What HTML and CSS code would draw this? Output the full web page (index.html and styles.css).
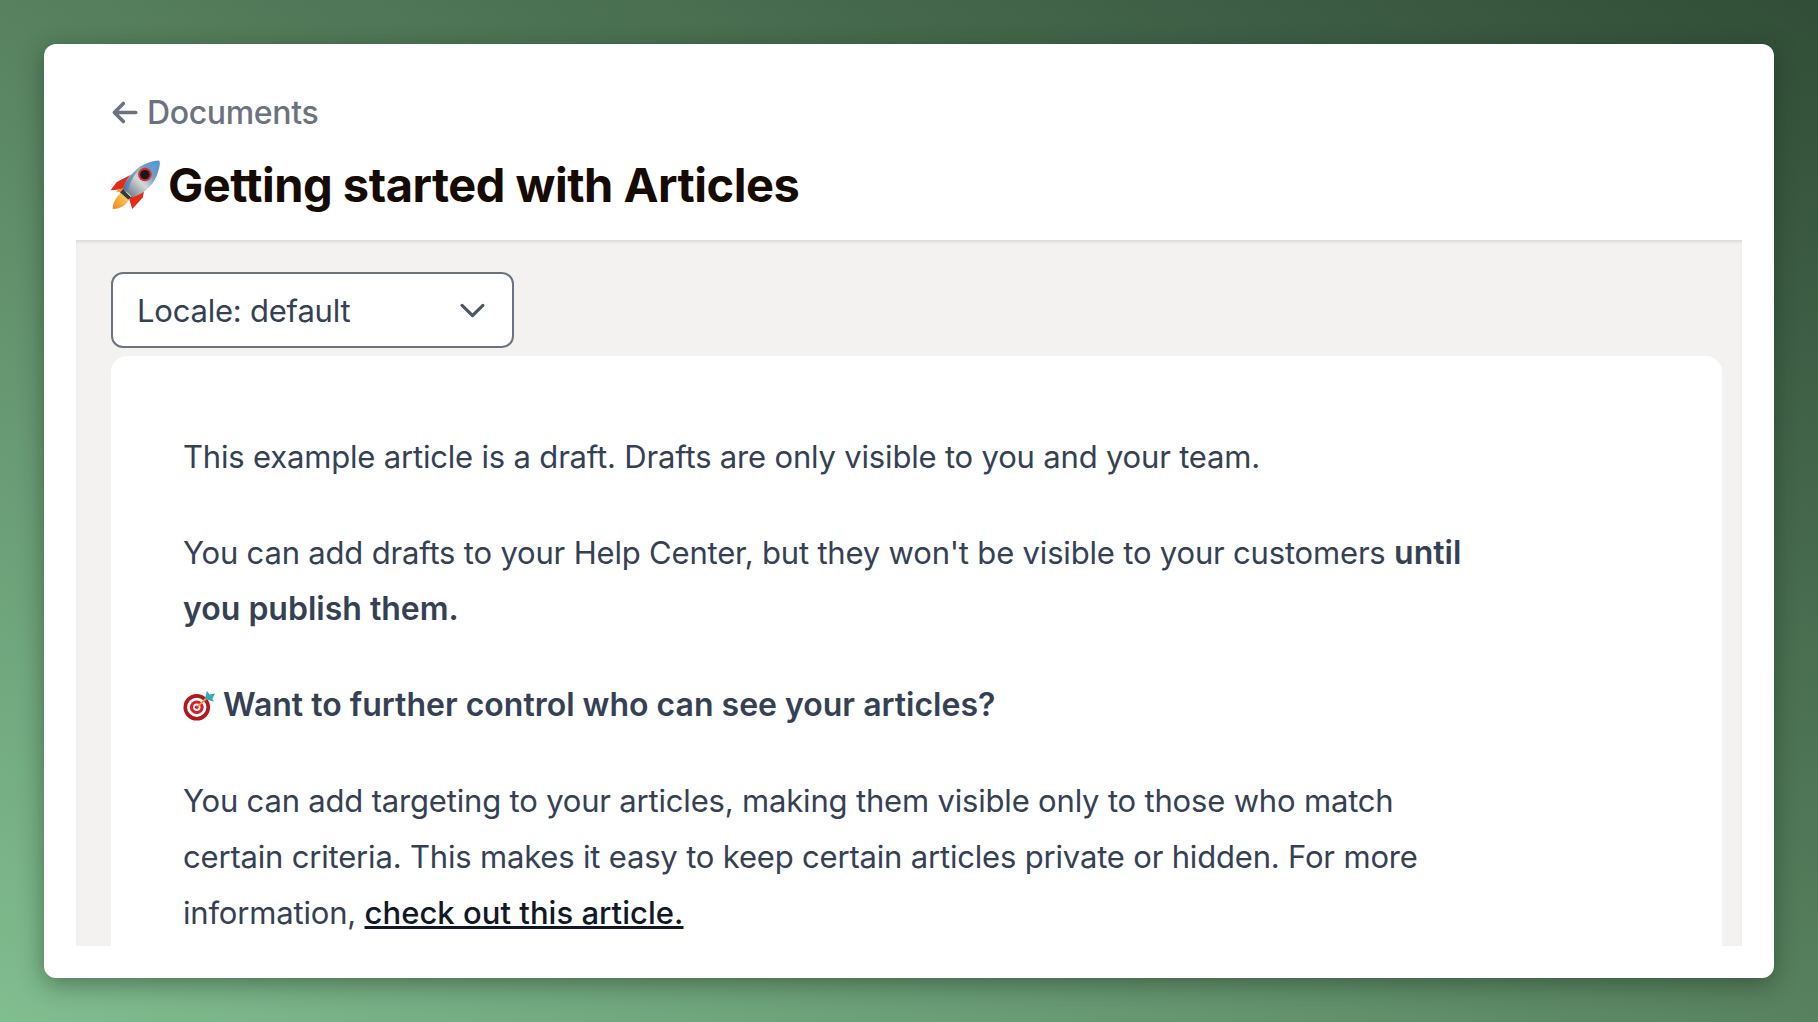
FILE: index.html
```html
<!DOCTYPE html>
<html lang="en">
<head>
    <meta charset="UTF-8">
    <title>Getting started with Articles</title>
    <link rel="stylesheet" href="styles.css">
</head>
<body>
    <div class="window">
        <header class="page-header">
            <a class="back-link" href="#">
                <svg class="back-icon" viewBox="0 0 24 24" fill="none" stroke="currentColor" stroke-width="3.2" stroke-linecap="round" stroke-linejoin="round">
                    <path d="M22 12H3M11 4l-8 8 8 8"/>
                </svg>
                Documents
            </a>
            <h1 class="page-title">
                <svg class="rocket" viewBox="0 0 48 48">
                    <defs>
                        <linearGradient id="hull" x1="1" y1="0" x2="0" y2="1">
                            <stop offset="0" stop-color="#4d97d8"/>
                            <stop offset="0.3" stop-color="#6f9cc4"/>
                            <stop offset="0.55" stop-color="#d4d8d8"/>
                            <stop offset="1" stop-color="#56606a"/>
                        </linearGradient>
                        <linearGradient id="belly" x1="0" y1="0" x2="1" y2="0">
                            <stop offset="0" stop-color="#3f78b0"/>
                            <stop offset="1" stop-color="#a9b4ba"/>
                        </linearGradient>
                        <linearGradient id="flame" x1="1" y1="0" x2="0" y2="1">
                            <stop offset="0" stop-color="#fbe878"/>
                            <stop offset="1" stop-color="#f0841a"/>
                        </linearGradient>
                    </defs>
                    <path d="M20 14 L6 21 L0 29 L11 28 L14 31 L19 24Z" fill="#e62a18"/>
                    <path d="M14 26 L5 30 L9 31Z" fill="#f7941d"/>
                    <path d="M33 26 L31 36 L21 47 L18 38 L20 35Z" fill="#e62a18"/>
                    <path d="M13 29 C7 33 2 40 2 47 C10 47 16 43 19 36Z" fill="url(#flame)"/>
                    <path d="M12 27 C15 17 25 6 38 2 C42 1 46 0 47 1 C48 3 47 7 46 10 C43 23 33 32 21 36Z" fill="url(#hull)"/>
                    <path d="M12 27 C15 19 21 12 29 7 C22 15 17 24 17 32Z" fill="url(#belly)"/>
                    <circle cx="33" cy="14" r="6.5" fill="#d92b24"/>
                    <circle cx="33" cy="14" r="4.5" fill="#15181d"/>
                    <path d="M12 28l8 8-3 2-8-7z" fill="#33383e"/>
                </svg>
                Getting started with Articles
            </h1>
        </header>

        <main class="panel">
            <button class="locale-select" type="button">
                <span>Locale: default</span>
                <svg class="chevron" viewBox="0 0 24 24" fill="none" stroke="currentColor" stroke-width="3" stroke-linecap="round" stroke-linejoin="round">
                    <path d="M2 7l10 10L22 7"/>
                </svg>
            </button>

            <article class="article">
                <p>This example article is a draft. Drafts are only visible to you and your team.</p>
                <p>You can add drafts to your Help Center, but they won't be visible to your customers <strong>until you publish them.</strong></p>
                <p><strong>
                    <svg class="target" viewBox="0 0 36 36">
                        <circle cx="15" cy="21" r="14.5" fill="#b3161b"/>
                        <circle cx="15" cy="21" r="10.5" fill="#fff"/>
                        <circle cx="15" cy="21" r="7.5" fill="#d7202a"/>
                        <circle cx="15" cy="21" r="4" fill="#fff"/>
                        <circle cx="15" cy="21" r="2" fill="#d7202a"/>
                        <path d="M16 20L28 9" stroke="#e8a33a" stroke-width="2"/>
                        <path d="M24 12L26 3 29 7 35 6 32 12 34 15z" fill="#35a9b5"/>
                    </svg>Want to further control who can see your articles?</strong></p>
                <p>You can add targeting to your articles, making them visible only to those who match certain criteria. This makes it easy to keep certain articles private or hidden. For more information, <a class="article-link" href="#">check out this article.</a></p>
            </article>
        </main>
    </div>
</body>
</html>
```

FILE: styles.css
```css
body {
    margin: 0;
    padding: 44px;
    box-sizing: border-box;
    height: 1022px;
    overflow: hidden;
    font-family: Inter, "Liberation Sans", sans-serif;
    background: linear-gradient(to bottom left, #314d37 0%, #57815f 50%, #80bd8f 100%);
}
.window {
    height: 934px;
    padding: 0 32px 32px;
    box-sizing: border-box;
    background: white;
    border-radius: 12px;
    box-shadow: 0 6px 24px rgba(20, 40, 25, 0.45);
    display: flex;
    flex-direction: column;
    overflow: hidden;
}
.page-header {
    height: 196px;
    flex-shrink: 0;
    padding: 48px 0 0 35px;
    box-sizing: border-box;
}
.back-link {
    display: flex;
    align-items: center;
    gap: 9px;
    height: 40px;
    color: #6b7280;
    font-size: 32px;
    font-weight: 500;
    letter-spacing: -0.35px;
    text-decoration: none;
}
.back-icon {
    width: 27px;
    height: 27px;
}
.page-title {
    display: flex;
    align-items: center;
    gap: 7px;
    margin: 25px 0 0 -1px;
    color: #160b02;
    font-size: 47px;
    font-weight: 700;
    line-height: 56px;
    letter-spacing: -0.5px;
}
.rocket {
    width: 51px;
    height: 50px;
}
.panel {
    flex: 1;
    min-height: 0;
    padding: 32px 20px 0 35px;
    background: #f3f2f0;
    box-shadow: inset 0 3px 3px -1px rgba(0, 0, 0, 0.1);
    overflow: hidden;
}
.locale-select {
    display: flex;
    align-items: center;
    justify-content: space-between;
    width: 403px;
    height: 76px;
    padding: 0 27px 0 24px;
    background: white;
    border: 2px solid #6b7280;
    border-radius: 12px;
    color: #344154;
    font-family: inherit;
    font-size: 31px;
    letter-spacing: -0.22px;
}
.chevron {
    width: 25px;
    height: 25px;
    color: #4b5563;
}
.article {
    margin-top: 8px;
    padding: 73px 72px 0;
    min-height: 700px;
    background: white;
    border-radius: 16px 16px 0 0;
    color: #344154;
    font-size: 31px;
    letter-spacing: -0.18px;
    line-height: 56px;
}
.article p {
    max-width: 1290px;
    margin: 0 0 40px;
}
.article strong {
    font-size: 32px;
    font-weight: 600;
    letter-spacing: 0;
}
.target {
    width: 33px;
    height: 33px;
    vertical-align: -5px;
    margin-right: 7px;
}
.article-link {
    color: #111827;
    font-weight: 500;
    text-decoration: underline;
    letter-spacing: 0.03px;
}
```
